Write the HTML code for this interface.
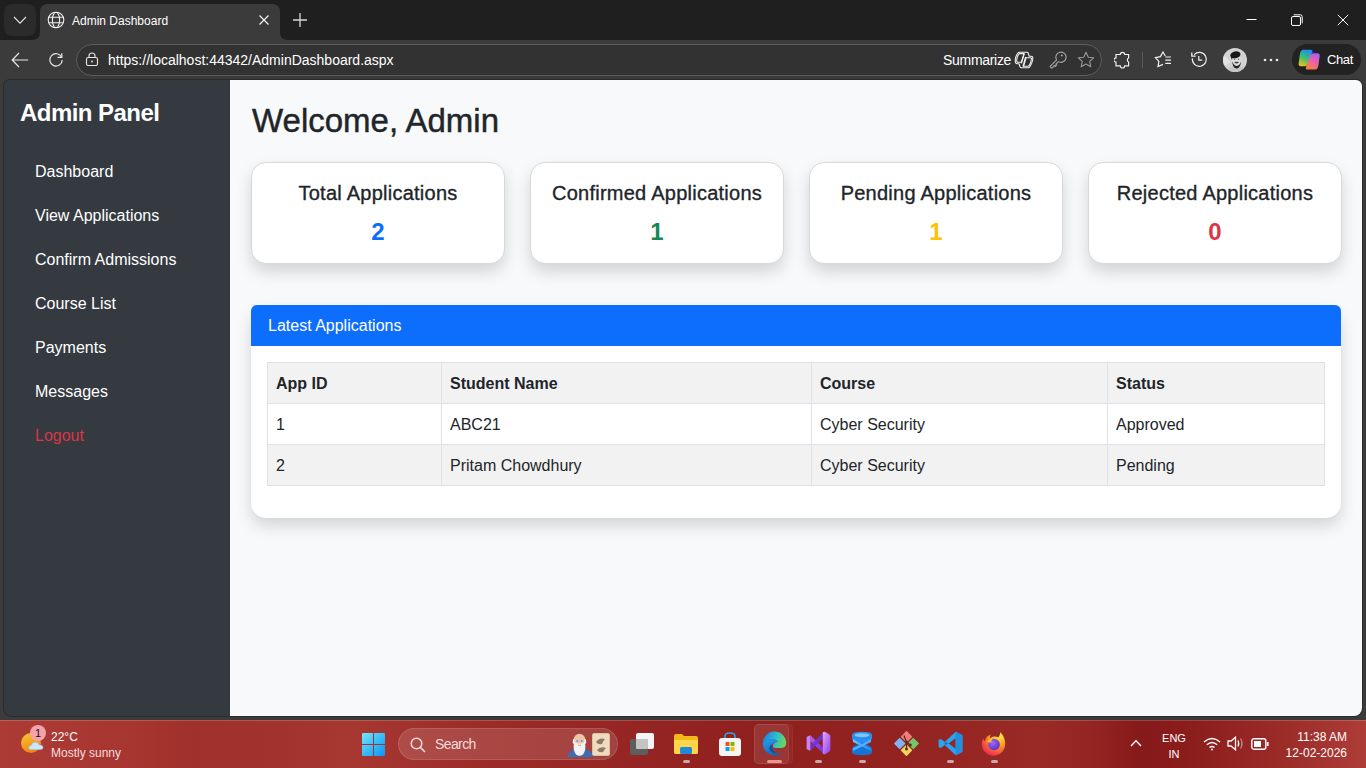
<!DOCTYPE html>
<html><head><meta charset="utf-8">
<style>
*{box-sizing:border-box;margin:0;padding:0}
html,body{width:1366px;height:768px;overflow:hidden;background:#3b3b3b;font-family:"Liberation Sans",sans-serif}
.abs{position:absolute}
#tabstrip{position:absolute;left:0;top:0;width:1366px;height:40px;background:#1f1f1f}
#toolbar{position:absolute;left:0;top:40px;width:1366px;height:40px;background:#3b3b3b}
#page{position:absolute;left:4px;top:80px;width:1358px;height:636px;background:#343a40;border-radius:6px 6px 8px 8px;overflow:hidden;box-shadow:0 0 0 1px #2a2a2a}
#content{position:absolute;left:226px;top:0;width:1132px;height:636px;background:#f8f9fa}
#sidebar{position:absolute;left:0;top:0;width:226px;height:636px;background:#343a40;color:#fff}
#taskbar{position:absolute;left:0;top:720px;width:1366px;height:48px;background:linear-gradient(90deg,#ad3b35 0px,#a83630 130px,#a0302b 190px,#a2322d 280px,#a73731 350px,#9c2c28 480px,#952522 640px,#8f201d 760px,#922320 900px,#9a2a26 1040px,#952522 1090px,#86191a 1140px,#8c1e1c 1200px,#9d2d29 1290px,#ae3d38 1366px)}
.nav{position:absolute;left:31px;font-size:16px;color:#fff}
.card{position:absolute;top:82px;width:254px;height:102px;background:#fff;border:1px solid #d8d8d8;border-radius:15px;box-shadow:0 .5rem 1rem rgba(0,0,0,.15);text-align:center}
.card .t{position:absolute;left:0;right:0;top:18.5px;font-size:20px;color:#212529;-webkit-text-stroke:0.35px #212529;letter-spacing:0.25px}
.card .n{position:absolute;left:0;right:0;top:55px;font-size:24px;font-weight:bold}
#latest{position:absolute;left:247px;top:225px;width:1090px;height:213px;background:#fff;border-radius:15px;box-shadow:0 .5rem 1rem rgba(0,0,0,.15)}
#lhead{position:absolute;left:0;top:0;width:1090px;height:41px;background:#0d6efd;border-radius:6px 6px 0 0;color:#fff;font-size:16px;padding:12px 17px}
table{position:absolute;left:16px;top:57px;width:1058px;border-collapse:collapse;font-size:16px;color:#212529}
td,th{border:1px solid #dee2e6;height:41px;padding:2px 8px 0;text-align:left;vertical-align:middle}
th{font-weight:bold;background:#f2f2f2}
tr.s td{background:#f2f2f2}
</style></head><body>
<div id="tabstrip">
  <div class="abs" style="left:4px;top:4px;width:32px;height:32px;background:#2b2b2b;border-radius:8px"></div>
  <svg class="abs" style="left:13px;top:14px" width="14" height="12" viewBox="0 0 14 12"><path d="M1 3 L7 9.2 L13 3" fill="none" stroke="#e6e6e6" stroke-width="1.1"/></svg>
  <svg class="abs" style="left:32px;top:4px" width="256" height="36" viewBox="0 0 256 36"><path d="M0 36 Q8 36 8 28 L8 8 Q8 0 16 0 L240 0 Q248 0 248 8 L248 28 Q248 36 256 36 Z" fill="#3b3b3b"/></svg>
  <svg class="abs" style="left:47px;top:11px" width="18" height="18" viewBox="0 0 18 18" fill="none" stroke="#f0f0f0" stroke-width="1.1"><circle cx="9" cy="9" r="7.8"/><ellipse cx="9" cy="9" rx="3.6" ry="7.8"/><path d="M1.6 6.3 H16.4 M1.6 11.7 H16.4"/></svg>
  <div class="abs" style="left:72px;top:13px;font-size:12px;color:#fff;line-height:16px">Admin Dashboard</div>
  <svg class="abs" style="left:258px;top:14px" width="12" height="12" viewBox="0 0 12 12"><path d="M1.5 1.5 L10.5 10.5 M10.5 1.5 L1.5 10.5" stroke="#f2f2f2" stroke-width="1.2"/></svg>
  <svg class="abs" style="left:292px;top:12px" width="16" height="16" viewBox="0 0 16 16"><path d="M8 1 V15 M1 8 H15" stroke="#d8d8d8" stroke-width="1.3"/></svg>
  <svg class="abs" style="left:1246px;top:14px" width="12" height="12" viewBox="0 0 12 12"><path d="M0.5 5.5 H10.5" stroke="#fff" stroke-width="1"/></svg>
  <svg class="abs" style="left:1291px;top:14px" width="12" height="12" viewBox="0 0 12 12" fill="none" stroke="#fff" stroke-width="1"><rect x="0.5" y="2.5" width="9" height="9" rx="1.5"/><path d="M2.7 0.8 H9.2 Q11.2 0.8 11.2 2.8 V9.3"/></svg>
  <svg class="abs" style="left:1337px;top:14px" width="12" height="12" viewBox="0 0 12 12"><path d="M0.8 0.8 L11.2 11.2 M11.2 0.8 L0.8 11.2" stroke="#fff" stroke-width="1"/></svg>
</div>
<div id="toolbar">
  <svg class="abs" style="left:11px;top:12px" width="18" height="16" viewBox="0 0 18 16" fill="none" stroke="#e8e8e8" stroke-width="1.2"><path d="M17.2 8 H1.5 M8 1 L1.2 8 L8 15"/></svg>
  <svg class="abs" style="left:48px;top:12px" width="16" height="16" viewBox="0 0 16 16" fill="none" stroke="#e8e8e8" stroke-width="1.2"><path d="M13.6 5.2 A6.2 6.2 0 1 0 14.2 8"/><path d="M13.8 1.2 V5.4 H9.6"/></svg>
  <div class="abs" style="left:76px;top:4px;width:1026px;height:32px;border:1px solid #5c5c5c;border-radius:16px;background:#323232"></div>
  <svg class="abs" style="left:85px;top:52px;top:12px" width="14" height="14" viewBox="0 0 14 14" fill="none" stroke="#e8e8e8" stroke-width="1.1"><rect x="1.5" y="5.5" width="11" height="8" rx="1.8"/><path d="M4 5.5 V4 A3 3 0 0 1 10 4 V5.5"/><circle cx="7" cy="9.5" r="0.9" fill="#e8e8e8" stroke="none"/></svg>
  <div class="abs" style="left:108px;top:12px;font-size:14px;color:#fff;line-height:16px">https://localhost:44342/AdminDashboard.aspx</div>
  <div class="abs" style="left:943px;top:12px;font-size:14px;letter-spacing:-0.3px;color:#fff;line-height:16px">Summarize</div>
  <svg class="abs" style="left:1012px;top:10px" width="24" height="20" viewBox="0 0 24 20" fill="none" stroke="#f2f2f2" stroke-width="1.1" stroke-linejoin="round"><path d="M7.5 2.2 H15 Q15.8 2.2 16.2 3 L17.2 6.3 H19.2 Q21 6.3 20.8 8.5 L20.5 10.5 Q20.2 12 19.5 13.5 L17.8 16.8 Q17.3 17.8 16 17.8 H9.5 Q8.5 17.8 8.1 17 L7 13.7 H5.5 Q3.3 13.7 3.3 11.5 V9.5 Q3.5 7 4.8 4.8 L5.8 3.2 Q6.3 2.2 7.5 2.2 Z"/><path d="M8 3.6 H12 L9.2 12.3 H6 Q4.8 12.3 4.8 11 V9.5 Q5 7 6.2 5 Q6.8 3.6 8 3.6 Z"/><path d="M14.2 7.7 H18.5 Q19.6 7.7 19.4 9 Q19 12 17.8 14.5 Q17 16.3 15.8 16.3 H11.5 Z"/><path d="M12.4 3.3 L9.4 13.4 M13.6 7 L11 16.5"/></svg>
  <svg class="abs" style="left:1049px;top:11px" width="18" height="18" viewBox="0 0 18 18" fill="none" stroke="#a8a8a8" stroke-width="1.1" stroke-linejoin="round"><path d="M7.6 8.8 A5.1 5.1 0 1 1 9.4 10.6 L6.9 13.1 L7.7 13.9 L6.3 15.3 L5.5 14.5 L3.4 16.6 Q2.7 17.3 2 16.6 L1.6 16.2 Q0.9 15.5 1.6 14.8 Z"/><circle cx="12.8" cy="4.6" r="1" fill="#a8a8a8" stroke="none"/></svg>
  <svg class="abs" style="left:1077px;top:11px" width="18" height="18" viewBox="0 0 18 18" fill="none" stroke="#9a9a9a" stroke-width="1.1" stroke-linejoin="round"><path d="M9 1.3 L11.3 6.2 L16.6 6.8 L12.7 10.4 L13.8 15.8 L9 13.1 L4.2 15.8 L5.3 10.4 L1.4 6.8 L6.7 6.2 Z"/></svg>
  <svg class="abs" style="left:1114px;top:11px" width="17" height="18" viewBox="0 0 17 18" fill="none" stroke="#f0f0f0" stroke-width="1.2"><path d="M2 3.5 H6.3 A2.2 2.2 0 0 1 10.7 3.5 H14.6 V7 A2.2 2.2 0 0 0 14.6 11 V14.8 H10.7 A2.2 2.2 0 0 1 6.3 14.8 H2 V11.2 A2.2 2.2 0 0 1 2 6.8 Z"/></svg>
  <div class="abs" style="left:1142px;top:12px;width:1px;height:16px;background:#5a5a5a"></div>
  <svg class="abs" style="left:1154px;top:11px" width="19" height="18" viewBox="0 0 19 18" fill="none" stroke="#f0f0f0" stroke-width="1.2"><path d="M11.3 5 L9 1 L6.4 5.6 L1.4 6.6 L4.9 10.4 L4 15.6 L9 13.4"/><path d="M11.3 6 H17 M11.3 9.2 H17 M11.3 12.4 H17"/></svg>
  <svg class="abs" style="left:1190px;top:11px" width="18" height="18" viewBox="0 0 18 18" fill="none" stroke="#f0f0f0" stroke-width="1.2"><path d="M4.2 3.6 A7 7 0 1 1 2.4 7.4"/><path d="M1.8 1.4 V5.2 H5.6" stroke-width="1.3"/><path d="M8.8 5 V9.2 H12.2"/></svg>
  <svg class="abs" style="left:1223px;top:8px" width="24" height="24" viewBox="0 0 24 24"><defs><clipPath id="avc"><circle cx="12" cy="12" r="12"/></clipPath></defs><g clip-path="url(#avc)"><rect width="24" height="24" fill="#d2d2d2"/><path d="M0 6 L8 14 L0 18 Z" fill="#e2e2e2"/><path d="M3 24 Q5 19 10 18.5 H17 Q22 19 23 24 Z" fill="#c4c4c4"/><ellipse cx="13.4" cy="12.8" rx="4.6" ry="6" fill="#dcdcdc"/><ellipse cx="12.4" cy="6.8" rx="5.2" ry="3.4" transform="rotate(-12 12.4 6.8)" fill="#171717"/><path d="M8 7 Q7.8 10 9 12 L9.6 9 Z" fill="#171717"/><path d="M9.2 13 Q9.4 20.2 13.6 20.6 Q17.8 20.2 18 13 Q17.2 17.6 13.6 18 Q10.4 17.6 9.2 13 Z" fill="#232323"/><ellipse cx="13.6" cy="14.6" rx="2.3" ry="0.8" fill="#3a3a3a"/><circle cx="11.6" cy="11.2" r="0.7" fill="#5a5a5a"/><circle cx="15.6" cy="11.2" r="0.7" fill="#5a5a5a"/></g></svg>
  <svg class="abs" style="left:1263px;top:18px" width="16" height="4" viewBox="0 0 16 4" fill="#e8e8e8"><circle cx="2" cy="2" r="1.3"/><circle cx="8" cy="2" r="1.3"/><circle cx="14" cy="2" r="1.3"/></svg>
  <div class="abs" style="left:1292px;top:4px;width:69px;height:31px;border-radius:16px;background:#222222"></div>
  <svg class="abs" style="left:1298px;top:9px" width="23" height="22" viewBox="0 0 23 22"><defs><linearGradient id="cg1" x1="0.6" y1="0" x2="0.2" y2="1"><stop offset="0" stop-color="#1f8ff0"/><stop offset="0.5" stop-color="#3dc06a"/><stop offset="1" stop-color="#f5c21b"/></linearGradient><linearGradient id="cg2" x1="0.8" y1="0" x2="0.3" y2="1"><stop offset="0" stop-color="#a55ef5"/><stop offset="0.55" stop-color="#ef62a0"/><stop offset="1" stop-color="#f6843a"/></linearGradient></defs><path d="M5 0.8 H12.5 Q15 0.8 14.2 3.2 L9.5 15.8 Q8.8 17.2 7 17.2 H2.8 Q0.4 17.2 0.7 14.6 L1.6 7 Q2.3 0.8 5 0.8 Z" fill="url(#cg1)"/><path d="M17.2 20.6 H9.6 Q7.2 20.6 8 18.2 L12.6 5.6 Q13.3 4.2 15 4.2 H19.6 Q21.9 4.2 21.7 6.8 L20.8 14 Q20.1 20.6 17.2 20.6 Z" fill="url(#cg2)"/><path d="M10.5 0.8 H12.5 Q15 0.8 14.2 3.2 L13 6.3 Q13.6 4.2 15.5 4.2 H16.5 Q15.5 0.8 10.5 0.8 Z" fill="#1a3fc0"/></svg>
  <div class="abs" style="left:1327px;top:12px;font-size:13px;color:#fff;line-height:16px;letter-spacing:-0.4px">Chat</div>
</div>
<div id="page">
  <div id="content"></div>
  <div id="sidebar">
    <div class="abs" style="left:16px;top:18.5px;font-size:24px;font-weight:bold;letter-spacing:-0.55px">Admin Panel</div>
    <div class="nav" style="top:83px">Dashboard</div>
    <div class="nav" style="top:127px">View Applications</div>
    <div class="nav" style="top:171px">Confirm Admissions</div>
    <div class="nav" style="top:215px">Course List</div>
    <div class="nav" style="top:259px">Payments</div>
    <div class="nav" style="top:303px">Messages</div>
    <div class="nav" style="top:347px;color:#dc3545">Logout</div>
  </div>
  <div class="abs" style="left:248px;top:22px;font-size:33px;color:#212529;-webkit-text-stroke:0.45px #212529">Welcome, Admin</div>
  <div class="card" style="left:247px"><div class="t">Total Applications</div><div class="n" style="color:#0d6efd">2</div></div>
  <div class="card" style="left:526px"><div class="t">Confirmed Applications</div><div class="n" style="color:#198754">1</div></div>
  <div class="card" style="left:805px"><div class="t">Pending Applications</div><div class="n" style="color:#ffc107">1</div></div>
  <div class="card" style="left:1084px"><div class="t">Rejected Applications</div><div class="n" style="color:#dc3545">0</div></div>
  <div id="latest">
    <div id="lhead">Latest Applications</div>
    <table>
      <tr><th style="width:174px">App ID</th><th style="width:370px">Student Name</th><th style="width:296px">Course</th><th>Status</th></tr>
      <tr><td>1</td><td>ABC21</td><td>Cyber Security</td><td>Approved</td></tr>
      <tr class="s"><td>2</td><td>Pritam Chowdhury</td><td>Cyber Security</td><td>Pending</td></tr>
    </table>
  </div>
</div>
<div id="taskbar">
  <div class="abs" style="left:0;top:0;width:1366px;height:1px;background:rgba(255,255,255,.18)"></div>
  <div class="abs" style="left:21px;top:13px;width:20px;height:20px;border-radius:10px;background:linear-gradient(160deg,#f2c12e 10%,#f39a1c 60%,#f07a10)"></div>
  <svg class="abs" style="left:28px;top:20px" width="16" height="10" viewBox="0 0 16 10"><path d="M3 9.5 Q0.5 9.5 0.8 7.2 Q1.2 5.2 3.4 5.4 Q4.2 2 7.6 2.2 Q10.6 2.4 11.2 5 Q14.8 4.8 15 7.4 Q15 9.5 12.6 9.5 Z" fill="#cfe4fb" stroke="#9cc6f0" stroke-width="0.6"/></svg>
  <div class="abs" style="left:30px;top:5px;width:16px;height:16px;border-radius:8px;background:#f7a1ab;color:#111;font-size:11px;line-height:16px;text-align:center">1</div>
  <div class="abs" style="left:51px;top:10px;font-size:12px;color:#fff;line-height:14px">22°C</div>
  <div class="abs" style="left:51px;top:25.5px;font-size:12px;color:#f3dede;line-height:14px">Mostly sunny</div>
  <svg class="abs" style="left:362px;top:13px" width="23" height="23" viewBox="0 0 23 23"><defs><linearGradient id="wl" gradientUnits="userSpaceOnUse" x1="0" y1="0" x2="23" y2="23"><stop offset="0" stop-color="#7ae4ff"/><stop offset="0.5" stop-color="#38bdf8"/><stop offset="1" stop-color="#0e92f5"/></linearGradient></defs><path d="M1.2 0 H11 V11 H0 V1.2 Q0 0 1.2 0 Z M12 0 H21.8 Q23 0 23 1.2 V11 H12 Z M0 12 H11 V23 H1.2 Q0 23 0 21.8 Z M12 12 H23 V21.8 Q23 23 21.8 23 H12 Z" fill="url(#wl)"/></svg>
  <div class="abs" style="left:398px;top:8px;width:220px;height:32px;border-radius:16px;background:rgba(255,255,255,.13);border:1px solid rgba(255,255,255,.12)"></div>
  <svg class="abs" style="left:410px;top:17px" width="16" height="16" viewBox="0 0 16 16" fill="none" stroke="#f2dcdc" stroke-width="1.5"><circle cx="6.5" cy="6.5" r="5.3"/><path d="M10.4 10.4 L15 15"/></svg>
  <div class="abs" style="left:435px;top:16px;font-size:14px;letter-spacing:-0.6px;color:#f3dada;line-height:16px">Search</div>
  <svg class="abs" style="left:566px;top:12px" width="28" height="26" viewBox="0 0 28 26"><path d="M1 25 Q3 19 8 17 H20 Q25 19 28 25 Z" fill="#3b6db3"/><circle cx="13.5" cy="7.5" r="5.8" fill="#efc4a6"/><path d="M7.2 7 Q6 10 7.5 12 L9 11 Q8.5 9 8.8 7.5 Z M19.8 7 Q21 10 19.5 12 L18 11 Q18.5 9 18.2 7.5 Z" fill="#f4f4f4"/><path d="M8 11 Q9 10 11 11.5 H16 Q18 10 19 11 Q20.5 18 17 22.5 Q13.5 25 10 22.5 Q6.5 18 8 11 Z" fill="#f2f2f2"/><circle cx="11.3" cy="9" r="1" fill="#6aa0d8"/><circle cx="15.7" cy="9" r="1" fill="#6aa0d8"/><path d="M12 13 Q13.5 14 15 13" stroke="#c97a6a" stroke-width="0.8" fill="none"/></svg>
  <div class="abs" style="left:592px;top:13px;width:18px;height:23px;background:#efdcc0;border-radius:2px;border:1px solid #d9c29e"></div>
  <svg class="abs" style="left:593px;top:16px" width="16" height="18" viewBox="0 0 16 18" fill="#8f7a65"><path d="M3 6 Q6 1 12 3 Q10 5 9 8 Q5 9 3 6 Z"/><path d="M4 14 Q7 10 13 12 Q11 14 10 16 Q6 17 4 14 Z"/></svg>
  <div class="abs" style="left:630px;top:13px;width:25px;height:23px">
    <div class="abs" style="left:6px;top:0;width:18px;height:16px;background:#f4f4f4;border-radius:2px"></div>
    <div class="abs" style="left:0;top:6px;width:18px;height:16px;background:#5e5e5e;border-radius:2px"></div>
    <div class="abs" style="left:6px;top:6px;width:12px;height:10px;background:#c4c4c4;border-radius:1px"></div>
  </div>
  <svg class="abs" style="left:673px;top:13px" width="26" height="22" viewBox="0 0 26 22"><path d="M1 3 Q1 1 3 1 H9 L11 3 H23 Q25 3 25 5 V19 Q25 21 23 21 H3 Q1 21 1 19 Z" fill="#f3b81a"/><path d="M1 7 H25 V19 Q25 21 23 21 H3 Q1 21 1 19 Z" fill="#ffd54a"/><rect x="7" y="14" width="12" height="7" rx="1.5" fill="#1f8ad6"/></svg>
  <svg class="abs" style="left:718px;top:11px" width="24" height="26" viewBox="0 0 24 26"><path d="M7 7 V5 Q7 2 12 2 Q17 2 17 5 V7" fill="none" stroke="#2aa7e8" stroke-width="1.6"/><rect x="1" y="7" width="22" height="18" rx="3" fill="#f5f5f5"/><rect x="7.5" y="11" width="4" height="4" fill="#f25022"/><rect x="12.5" y="11" width="4" height="4" fill="#7fba00"/><rect x="7.5" y="16" width="4" height="4" fill="#00a4ef"/><rect x="12.5" y="16" width="4" height="4" fill="#ffb900"/></svg>
  <div class="abs" style="left:754px;top:4px;width:39px;height:40px;border-radius:5px;background:rgba(255,255,255,.035);border:1px solid rgba(255,255,255,.05)"></div>
  <div class="abs" style="left:754px;top:4px;width:35px;height:40px;border-radius:5px;background:rgba(255,255,255,.07);border:1px solid rgba(255,255,255,.07)"></div>
  <svg class="abs" style="left:762px;top:11px" width="25" height="25" viewBox="0 0 24 24"><defs><linearGradient id="eg1" x1="0.1" y1="0.4" x2="0.95" y2="0.6"><stop offset="0" stop-color="#1a8fe3"/><stop offset="0.55" stop-color="#2fc1c9"/><stop offset="1" stop-color="#6ed45c"/></linearGradient><linearGradient id="eg2" x1="0" y1="0" x2="0.6" y2="1"><stop offset="0" stop-color="#2aa0f0"/><stop offset="1" stop-color="#0e63b8"/></linearGradient></defs><path d="M0.8 12 A11.2 11.2 0 0 1 23.2 11.5 Q23.2 16.2 18.5 16.2 H12.8 Q10.2 16.2 10.6 13.6 Q11.4 10.4 15.4 10.6 Q12.5 6.8 7 8 Q2.8 9 0.8 12 Z" fill="url(#eg1)"/><path d="M0.8 12 Q2.8 9 7 8 Q12.5 6.8 15.4 10.6 Q11.2 9.8 9.6 13 Q8.4 18.5 14.2 21.6 Q17.6 23 21.4 20.4 Q18 23.4 12 23.2 A11.2 11.2 0 0 1 0.8 12 Z" fill="url(#eg2)"/><path d="M9.6 13 Q8.4 18.5 14.2 21.6 Q9.8 21.8 7.6 18 Q6.2 15 9.6 13 Z" fill="#0b4f9a"/></svg>
  <div class="abs" style="left:767px;top:40px;width:15px;height:3px;border-radius:2px;background:#f0938a"></div>
  <svg class="abs" style="left:806px;top:11px" width="25" height="24" viewBox="0 0 25 24"><defs><linearGradient id="vs1" x1="0" y1="0" x2="1" y2="1"><stop offset="0" stop-color="#e7a6ff"/><stop offset="1" stop-color="#8a3ee6"/></linearGradient><linearGradient id="vs2" x1="0" y1="0" x2="1" y2="0"><stop offset="0" stop-color="#b55cf2"/><stop offset="1" stop-color="#6f2fd8"/></linearGradient></defs><path d="M0.6 7 Q0.6 5.6 1.8 5.2 L4.5 4.2 V19.8 L1.8 18.8 Q0.6 18.4 0.6 17 Z" fill="#c784f7"/><path d="M4.5 4.2 L18 17.5 V23.2 L4.5 10 Z" fill="url(#vs2)"/><path d="M4.5 19.8 L18 6.5 V0.8 L4.5 14 Z" fill="#6c34d6" opacity=".9"/><path d="M16.8 1.2 Q18 0.4 19.4 1 L23.4 3.4 Q24.4 4 24.4 5.4 V18.6 Q24.4 20 23.4 20.6 L19.4 23 Q18 23.6 16.8 22.8 Z" fill="url(#vs1)"/></svg>
  <svg class="abs" style="left:851px;top:11px" width="22" height="25" viewBox="0 0 22 25"><defs><linearGradient id="ad1" x1="0" y1="0" x2="1" y2="1"><stop offset="0" stop-color="#79c8ff"/><stop offset="1" stop-color="#1a86e6"/></linearGradient></defs><path d="M1 4 Q1 0.8 11 0.8 Q21 0.8 21 4 V7 Q21 9 18 10.5 L11 13.5 L4 10.5 Q1 9 1 7 Z" fill="#2a8ff0"/><ellipse cx="11" cy="4.2" rx="7.5" ry="2" fill="#a8dcff" opacity=".7"/><path d="M1 21 Q1 24.2 11 24.2 Q21 24.2 21 21 V18 Q21 16 18 14.5 L11 11.5 L4 14.5 Q1 16 1 18 Z" fill="#1673d6"/><path d="M2 8 Q8 12 20 17 L20 20 Q12 16 2 11 Z" fill="url(#ad1)"/><path d="M20 8 Q14 12 2 17 L2 20 Q10 16 20 11 Z" fill="#4eb0ff"/></svg>
  <svg class="abs" style="left:894px;top:11px" width="25" height="25" viewBox="0 0 25 25"><g transform="rotate(45 12.5 12.5)"><rect x="3.5" y="3.5" width="8.4" height="8.4" rx="0.8" fill="#f07c7c"/><rect x="13.1" y="3.5" width="8.4" height="8.4" rx="0.8" fill="#78c46a"/><rect x="3.5" y="13.1" width="8.4" height="8.4" rx="0.8" fill="#7fb3f2"/><rect x="13.1" y="13.1" width="8.4" height="8.4" rx="0.8" fill="#f4d35e"/></g><path d="M10 4.5 L12.5 11 L12.5 18 M12.5 11 L16 13.8" stroke="#5b2d1a" stroke-width="1.3" fill="none"/><circle cx="12.5" cy="18" r="1.5" fill="#5b2d1a"/><circle cx="16.3" cy="14" r="1.5" fill="#5b2d1a"/><circle cx="12.5" cy="11" r="1.3" fill="#5b2d1a"/></svg>
  <svg class="abs" style="left:938px;top:11px" width="25" height="25" viewBox="0 0 25 25"><path d="M17.6 0.8 L23.8 3.8 Q24.4 4.2 24.4 5 V20 Q24.4 20.8 23.8 21.2 L17.6 24.2 L6.8 14 L2.8 17.1 L0.6 15.9 V9.1 L2.8 7.9 L6.8 11 L17.6 0.8 Z M17.6 7 L10.8 12.5 L17.6 18 Z" fill="#2aa3f0" fill-rule="evenodd"/><path d="M17.6 0.8 L23.8 3.8 Q24.4 4.2 24.4 5 V20 Q24.4 20.8 23.8 21.2 L17.6 24.2 Z" fill="#1f8fe0"/><path d="M6.8 11 L10.8 12.5 L6.8 14 Z" fill="#0f6fc4"/></svg>
  <svg class="abs" style="left:981px;top:11px" width="25" height="25" viewBox="0 0 25 25"><defs><radialGradient id="ff" cx="0.75" cy="0.15" r="1.05"><stop offset="0" stop-color="#ffef4a"/><stop offset="0.4" stop-color="#ff9a1f"/><stop offset="0.8" stop-color="#f23a4a"/><stop offset="1" stop-color="#d9245f"/></radialGradient><radialGradient id="fg" cx="0.4" cy="0.35" r="0.7"><stop offset="0" stop-color="#9d6cf5"/><stop offset="1" stop-color="#5a2fc4"/></radialGradient></defs><path d="M19 1 Q24.5 6 24.2 13.5 A11.7 11.7 0 1 1 2.2 7.5 Q2.5 9.5 3.8 10.2 Q5 5 10 3.6 Q8 5.5 9.5 7 Q13 4.5 17.5 6.5 Q19.5 4 19 1 Z" fill="url(#ff)"/><circle cx="13" cy="13.5" r="5.8" fill="url(#fg)"/><path d="M6 11 Q8 6.5 13 7 Q10 8.5 10.5 11.5 Q8 11.5 6 11 Z" fill="#ffb53a"/></svg>
  <div class="abs" style="left:683px;top:40px;width:7px;height:3px;border-radius:2px;background:#c9a9a6"></div>
  <div class="abs" style="left:815px;top:40px;width:7px;height:3px;border-radius:2px;background:#c9a9a6"></div>
  <div class="abs" style="left:859px;top:40px;width:7px;height:3px;border-radius:2px;background:#c9a9a6"></div>
  <div class="abs" style="left:947px;top:40px;width:7px;height:3px;border-radius:2px;background:#c9a9a6"></div>
  <div class="abs" style="left:991px;top:40px;width:7px;height:3px;border-radius:2px;background:#c9a9a6"></div>
  <svg class="abs" style="left:1130px;top:19px" width="12" height="8" viewBox="0 0 12 8"><path d="M1 7 L6 1.8 L11 7" fill="none" stroke="#fff" stroke-width="1.4"/></svg>
  <div class="abs" style="left:1160px;top:9.5px;width:28px;text-align:center;font-size:11px;color:#fff;line-height:16px">ENG<br>IN</div>
  <svg class="abs" style="left:1203px;top:17px" width="18" height="14" viewBox="0 0 18 14" fill="none" stroke="#fff" stroke-width="1.4"><path d="M1 5 Q9 -2 17 5"/><path d="M3.8 7.8 Q9 3 14.2 7.8"/><path d="M6.5 10.5 Q9 8.3 11.5 10.5"/><circle cx="9" cy="12.6" r="1" fill="#fff" stroke="none"/></svg>
  <svg class="abs" style="left:1227px;top:16px" width="18" height="15" viewBox="0 0 18 15" fill="none" stroke="#fff" stroke-width="1.3"><path d="M1 5 H4 L8.5 1.2 V13.8 L4 10 H1 Z"/><path d="M11 4.5 Q12.5 7.5 11 10.5"/><path d="M13.6 2.5 Q16.4 7.5 13.6 12.5" stroke="rgba(255,255,255,.45)"/></svg>
  <svg class="abs" style="left:1251px;top:18px" width="18" height="12" viewBox="0 0 18 12"><rect x="0.8" y="0.8" width="14" height="10.4" rx="2" fill="none" stroke="#fff" stroke-width="1.4"/><rect x="3" y="3" width="7" height="6" fill="#fff"/><rect x="15.8" y="4" width="1.8" height="4" rx="0.5" fill="#fff"/></svg>
  <div class="abs" style="left:1280px;top:9px;width:67px;text-align:right;font-size:12px;color:#fff;line-height:16px">11:38 AM<br>12-02-2026</div>
</div>
</body></html>
